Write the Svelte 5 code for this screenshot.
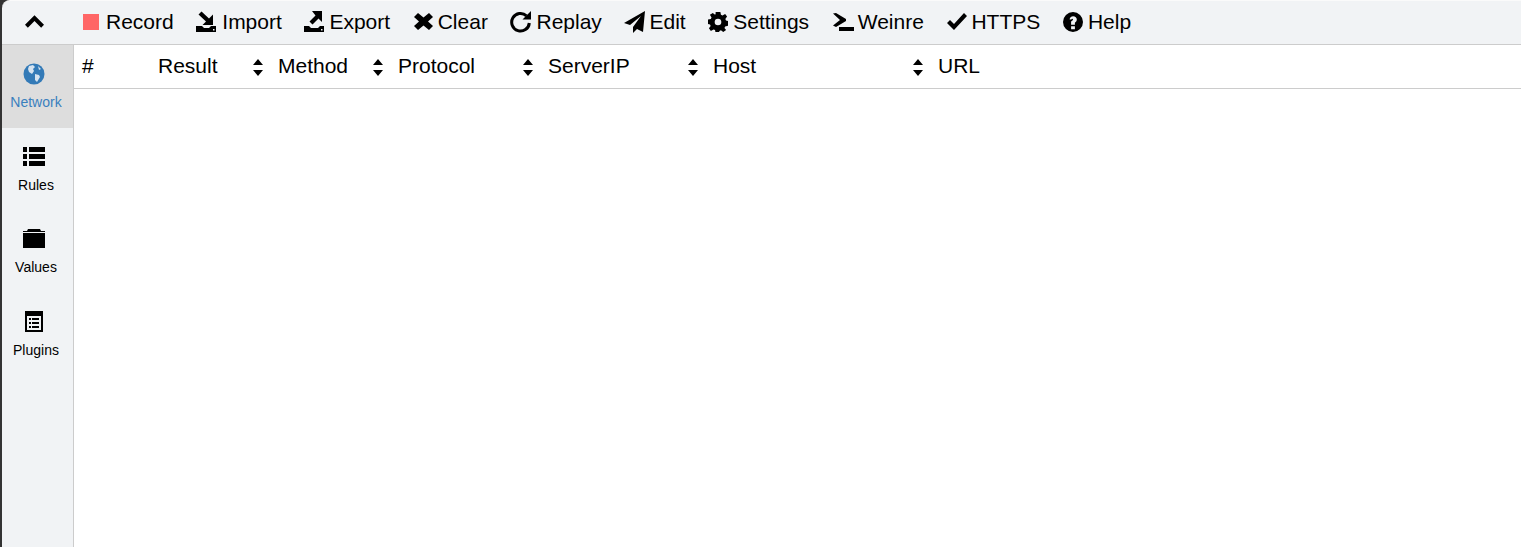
<script>
	const tools = [
		{ name: 'Record', icon: 'record', gap: 5, width: 18 },
		{ name: 'Import', icon: 'import', gap: 5, width: 21 },
		{ name: 'Export', icon: 'export', gap: 4, width: 21 },
		{ name: 'Clear', icon: 'clear', gap: 5, width: 20 },
		{ name: 'Replay', icon: 'replay', gap: 4, width: 22 },
		{ name: 'Edit', icon: 'edit', gap: 2, width: 23 },
		{ name: 'Settings', icon: 'settings', gap: 5, width: 20 },
		{ name: 'Weinre', icon: 'weinre', gap: 4, width: 22 },
		{ name: 'HTTPS', icon: 'https', gap: 3, width: 22 },
		{ name: 'Help', icon: 'help', gap: 5, width: 20 }
	];

	const tabs = [
		{ name: 'Network', icon: 'globe', active: true },
		{ name: 'Rules', icon: 'list' },
		{ name: 'Values', icon: 'folder' },
		{ name: 'Plugins', icon: 'plugins' }
	];

	const columns = [
		{ name: '#', width: 76 },
		{ name: 'Result', width: 120, sort: true },
		{ name: 'Method', width: 120, sort: true },
		{ name: 'Protocol', width: 150, sort: true },
		{ name: 'ServerIP', width: 165, sort: true },
		{ name: 'Host', width: 225, sort: true },
		{ name: 'URL', width: 120 }
	];
</script>

{#snippet glyph(icon)}
	{#if icon === 'record'}
		<svg width="18" height="18" viewBox="0 0 18 18"><rect x="0" y="1" width="16" height="16" fill="#ff6666" /></svg>
	{:else if icon === 'import'}
		<svg width="21" height="22" viewBox="0 0 21 22"><path d="M0 15h6l2 2h5l2-2h5v6H0z" /><path d="M17 14H6.500l3.500-3.500-7.500-7 3-3 7.500 7L17 3.500z" /><rect x="17" y="18" width="1.500" height="1.500" fill="#f1f3f5" /></svg>
	{:else if icon === 'export'}
		<svg width="21" height="22" viewBox="0 0 21 22"><path d="M0 15h5l2 2h7l2-2h4v6H0z" /><path d="M18 0v11l-3.500-3.500-6 6-3-3 6-6L8 0z" /><rect x="17" y="18" width="1.500" height="1.500" fill="#f1f3f5" /></svg>
	{:else if icon === 'clear'}
		<svg width="20" height="17" viewBox="-1 0 20 17"><path d="M0 4l4-4 5.500 4.500L15 0l4 4-5 4.500 5 4.500-4 4-5.500-4.500L4 17l-4-4 5-4.500z" /></svg>
	{:else if icon === 'replay'}
		<svg width="22" height="22" viewBox="0 0 22 22"><path d="M16.500 4.800A8.800 8.800 0 1 0 19.300 12" fill="none" stroke="#000" stroke-width="3" /><path d="M21 0v8.500h-8.500z" /></svg>
	{:else if icon === 'edit'}
		<svg width="23" height="22" viewBox="0 0 23 22"><path d="M21 0L0 12l6 2L17 5 9 16v6l4-4 6 3z" /></svg>
	{:else if icon === 'settings'}
		<svg width="20" height="20" viewBox="0 0 21 21"><path fill-rule="evenodd" d="M8 0h5l.6 3 1.600.7L18 2l2 2.800-1.800 2.600.7 1.600 2.100.5v5l-3 .6-.7 1.600L19 19l-3 2-2.400-1.800-1.600.7-.5 2.100H8l-.6-3-1.600-.7L3 20 1 17l1.800-2.400-.7-1.600L0 12.500V8l3-.6.7-1.600L2 3l3-2 2.400 1.800L8 2.100z M10.500 7a3.500 3.500 0 1 0 0 7 3.500 3.500 0 0 0 0-7z" /></svg>
	{:else if icon === 'weinre'}
		<svg width="22" height="20" viewBox="0 0 22 20"><path d="M1 1.500L4 1l10 6v2L4 15l-3-1.500L8 8z" /><rect x="7" y="15" width="15" height="4" /></svg>
	{:else if icon === 'https'}
		<svg width="22" height="20" viewBox="0 0 22 20"><path d="M1 11l3-3 4 4L18 1l3 3L8 18z" /></svg>
	{:else if icon === 'help'}
		<svg width="20" height="20" viewBox="0 0 21 21"><path fill-rule="evenodd" d="M10.500 0a10.500 10.500 0 1 0 0 21 10.500 10.500 0 0 0 0-21zM8.500 15h4v3h-4zM7 8c0-2 1.500-3.500 3.700-3.500S14.500 6 14.500 8c0 1.800-1 2.500-2 3.200v2.300h-4v-3.500c1-.8 2-1 2-2 0-.5-.3-.8-.8-.8-.6 0-.8.4-.8.8z" /></svg>
	{:else if icon === 'globe'}
		<svg width="22" height="22" viewBox="0 0 22 22"><circle cx="11" cy="11" r="10.500" fill="#337ab7" /><path fill="#d5e3f0" d="M6 3l4-1 2 2-2 2 1 2-2 3-3-2-1-3zM12 11l4 1 1 2-3 5-2-2zM15 3l3 3-2 1z" /></svg>
	{:else if icon === 'list'}
		<svg width="22" height="20" viewBox="0 0 22 20"><path d="M0 0h4v5H0zM6 0h16v5H6zM0 7h4v5H0zM6 7h16v5H6zM0 14h4v5H0zM6 14h16v5H6z" /></svg>
	{:else if icon === 'folder'}
		<svg width="22" height="20" viewBox="0 0 22 20"><path d="M5 0h12l1 2h4v1H0V2h4zM0 4h22v15H0z" /></svg>
	{:else if icon === 'plugins'}
		<svg width="20" height="22" viewBox="0 0 20 22"><path fill-rule="evenodd" d="M1 0h18v21H1zM3 5v14h14V5z" /><path d="M5 7h2v2H5zM8 7h7v2H8zM5 11h2v2H5zM8 11h7v2H8zM5 15h2v2H5zM8 15h7v2H8z" /></svg>
	{/if}
{/snippet}

<div class="app">
	<div class="toolbar">
		<div class="collapse">
			<svg width="19" height="13" viewBox="0 0 20 13"><path d="M10 0l10 10-3 3-7-7-7 7-3-3z" /></svg>
		</div>
		{#each tools as tool}
			<div class="tool" style="gap: {tool.gap}px">
				<span class="tool-icon" style="width: {tool.width}px">{@render glyph(tool.icon)}</span>
				<span>{tool.name}</span>
			</div>
		{/each}
	</div>
	<div class="body">
		<div class="tabs">
			{#each tabs as tab}
				<div class="tab" class:active={tab.active}>
					<span class="tab-icon">{@render glyph(tab.icon)}</span>
					<span>{tab.name}</span>
				</div>
			{/each}
		</div>
		<div class="content">
			<div class="table-head">
				{#each columns as col}
					<div class="th" style="width: {col.width}px">
						<span>{col.name}</span>
						{#if col.sort}
							<svg class="sort" width="10" height="17" viewBox="0 0 10 17"><path d="M5 0l5 6H0zM0 11h10l-5 6z" /></svg>
						{/if}
					</div>
				{/each}
			</div>
		</div>
	</div>
</div>

<style>
	:global(body) {
		margin: 0;
		background: #333;
	}

	.app {
		box-sizing: border-box;
		height: 547px;
		width: 1521px;
		padding-left: 2px;
		display: flex;
		flex-direction: column;
		font-family: "Liberation Sans", Arial, sans-serif;
		color: #000;
		overflow: hidden;
	}

	svg {
		display: block;
		fill: #000;
	}

	.toolbar {
		flex: none;
		box-sizing: border-box;
		height: 45px;
		padding-bottom: 2px;
		display: flex;
		align-items: center;
		background: #f1f3f5;
		border-top: 1px solid #fafafa;
		border-bottom: 1px solid #ccc;
		border-top-left-radius: 8px;
		font-size: 21px;
	}

	.collapse {
		width: 81px;
		padding-left: 23px;
		box-sizing: border-box;
		flex: none;
	}

	.tool {
		display: flex;
		align-items: center;
		margin-right: 22.6px;
		height: 100%;
	}

	.tool-icon {
		display: flex;
		justify-content: flex-start;
		flex: none;
	}

	.body {
		flex: 1;
		display: flex;
		min-height: 0;
	}

	.tabs {
		flex: none;
		width: 71px;
		background: #f1f3f5;
		border-right: 1px solid #ccc;
		font-size: 14px;
	}

	.tab {
		height: 82.67px;
		box-sizing: border-box;
		padding: 18px 3px 0 0;
		display: flex;
		flex-direction: column;
		align-items: center;
		gap: 9px;
	}

	.tab.active {
		background: #ddd;
		color: #3a80bd;
	}

	.tab-icon {
		height: 22px;
		margin-right: 4px;
		display: flex;
		align-items: center;
	}

	.content {
		flex: 1;
		background: #fff;
	}

	.table-head {
		box-sizing: border-box;
		height: 44px;
		display: flex;
		border-bottom: 1px solid #ccc;
		font-size: 21px;
	}

	.th {
		flex: none;
		position: relative;
		box-sizing: border-box;
		padding: 0 0 2px 8px;
		display: flex;
		align-items: center;
	}

	.sort {
		position: absolute;
		right: 7px;
		top: 14px;
	}
</style>
